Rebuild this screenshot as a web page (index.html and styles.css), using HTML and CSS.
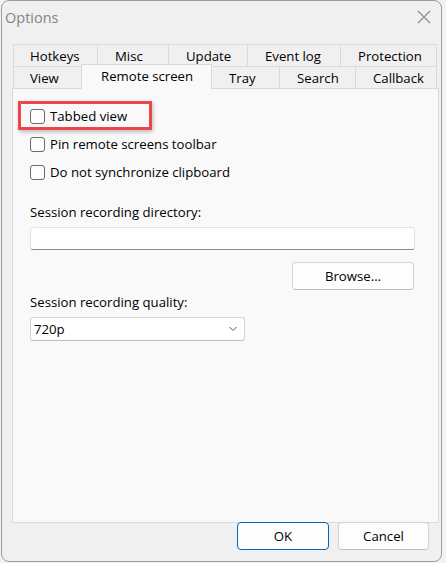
FILE: index.html
```html
<!DOCTYPE html>
<html lang="en">
<head>
<meta charset="utf-8">
<title>Options</title>
<link rel="stylesheet" href="styles.css">
</head>
<body>
<div class="window">
  <div class="titlebar">
    <span class="title">Options</span>
    <svg class="close" width="14" height="14" viewBox="0 0 14 14"><path d="M1 1 L13 13 M13 1 L1 13" stroke="#8a8a8a" stroke-width="1.1" fill="none"/></svg>
  </div>
  <div class="tabs">
    <div class="tab-row row1">
      <div class="tab">Hotkeys</div>
      <div class="tab">Misc</div>
      <div class="tab">Update</div>
      <div class="tab">Event log</div>
      <div class="tab">Protection</div>
    </div>
    <div class="tab-row row2">
      <div class="tab">View</div>
      <div class="tab selected">Remote screen</div>
      <div class="tab">Tray</div>
      <div class="tab">Search</div>
      <div class="tab">Callback</div>
    </div>
  </div>
  <div class="panel">
    <div class="check-row highlighted">
      <span class="box"></span><span>Tabbed view</span>
      <span class="highlight"></span>
    </div>
    <div class="check-row">
      <span class="box"></span><span>Pin remote screens toolbar</span>
    </div>
    <div class="check-row">
      <span class="box"></span><span>Do not synchronize clipboard</span>
    </div>
    <div class="label first-label">Session recording directory:</div>
    <div class="input"></div>
    <div class="browse-row"><div class="button browse">Browse...</div></div>
    <div class="label">Session recording quality:</div>
    <div class="select">
      <span>720p</span>
      <svg width="10" height="6" viewBox="0 0 10 6"><path d="M1.5 1 L5 4.5 L8.5 1" stroke="#555" stroke-width="1" fill="none"/></svg>
    </div>
  </div>
  <div class="buttons">
    <div class="button ok">OK</div>
    <div class="button cancel">Cancel</div>
  </div>
</div>
</body>
</html>
```

FILE: styles.css
```css
* { box-sizing: border-box; }
html, body { margin: 0; padding: 0; }
body {
  background: #f2f2f2;
  font-family: "Open Sans", "Noto Sans", sans-serif;
  font-size: 13.2px;
  color: #000;
  width: 446px;
  height: 563px;
  overflow: hidden;
}
.window {
  margin-left: 1px;
  width: 441px;
  height: 562px;
  border: 1px solid #9c9c9c;
  border-radius: 8px;
  background: #f0f0f0;
  display: flex;
  flex-direction: column;
}
.titlebar {
  height: 33px;
  display: flex;
  align-items: center;
  justify-content: space-between;
  padding: 0 10px 0 3px;
}
.title {
  font-size: 14.5px;
  color: #858585;
}
.close { margin-top: -1px; }
.tabs {
  margin: 10px 0 0 11px;
  width: 424px;
}
.tab-row {
  display: grid;
  height: 22px;
}
.row1 { grid-template-columns: 85px 71px 79px 93px 96px; }
.row2 { grid-template-columns: 69px 130px 68px 76px 81px; }
.tab {
  border: 1px solid #dadada;
  border-left: 0;
  border-bottom: 0;
  padding-left: 17px;
  display: flex;
  align-items: center;
  background: #f0f0f0;
  white-space: nowrap;
}
.tab:first-child {
  border-left: 1px solid #dadada;
  padding-left: 16px;
}
.tab.selected {
  position: relative;
  z-index: 2;
  margin-top: -2px;
  margin-left: -1px;
  height: 25px;
  border-left: 1px solid #dadada;
  background: #f9f9f9;
  padding-left: 19px;
  padding-bottom: 2px;
}
.panel {
  margin-left: 10px;
  width: 427px;
  height: 435px;
  border: 1px solid #dadada;
  background: #f9f9f9;
  padding: 13px 23px 0 17px;
}
.check-row {
  position: relative;
  height: 28px;
  display: flex;
  align-items: center;
  gap: 5px;
}
.box {
  width: 15px;
  height: 15px;
  border: 1px solid #6a6a6a;
  border-radius: 3px;
  background: #fdfdfd;
  flex: none;
}
.highlight {
  position: absolute;
  left: -12px;
  top: -1px;
  width: 134px;
  height: 29px;
  border: 3px solid #ef444b;
  box-shadow: 1px 2px 4px rgba(0, 0, 0, 0.25);
}
.label {
  height: 20px;
  line-height: 20px;
  margin-top: 2px;
}
.first-label { margin-top: 16px; }
.input {
  margin-top: 5px;
  width: 385px;
  height: 23px;
  background: #fff;
  border: 1px solid #e3e3e3;
  border-bottom: 1px solid #8a8a8a;
  border-radius: 3px;
}
.browse-row {
  display: flex;
  justify-content: flex-end;
  width: 385px;
  margin-top: 12px;
}
.button {
  height: 28px;
  display: flex;
  align-items: center;
  justify-content: center;
  background: #fdfdfd;
  border: 1px solid #d3d3d3;
  border-bottom-color: #bdbdbd;
  border-radius: 4px;
}
.browse {
  width: 122px;
  margin-right: 1px;
}
.select {
  margin-top: 5px;
  width: 215px;
  height: 24px;
  background: #fff;
  border: 1px solid #d3d3d3;
  border-bottom-color: #bdbdbd;
  border-radius: 3px;
  display: flex;
  align-items: center;
  justify-content: space-between;
  padding: 0 6px 0 3px;
}
.buttons {
  display: flex;
  justify-content: flex-end;
  gap: 9px;
  margin-top: -1px;
  padding-right: 12px;
}
.ok {
  width: 92px;
  border: 1px solid #0067c0;
}
.cancel { width: 91px; }
```
